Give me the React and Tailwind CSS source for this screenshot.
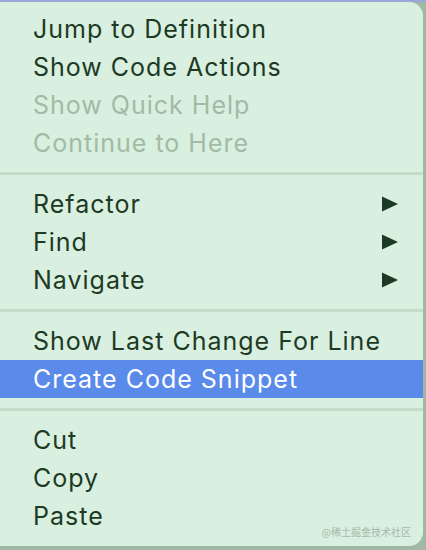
import { Fragment } from "react";

const sections = [
  [
    { label: "Jump to Definition" },
    { label: "Show Code Actions" },
    { label: "Show Quick Help", disabled: true },
    { label: "Continue to Here", disabled: true },
  ],
  [
    { label: "Refactor", submenu: true },
    { label: "Find", submenu: true },
    { label: "Navigate", submenu: true },
  ],
  [{ label: "Show Last Change For Line" }, { label: "Create Code Snippet", active: true }],
  [{ label: "Cut" }, { label: "Copy" }, { label: "Paste" }],
];

const Arrow = () => (
  <svg width="18" height="18" viewBox="0 0 18 18" className="shrink-0">
    <path d="M1 1.5 L17 9 L1 16.5 Z" fill="currentColor" />
  </svg>
);

const MenuItem = ({ item }) => {
  let color = "text-[#1d3a25]";
  if (item.disabled) color = "text-[#a2baa6]";
  if (item.active) color = "text-white bg-[#5a8aea]";
  return (
    <div className={`flex h-[38px] items-center justify-between pl-[33px] pr-[24px] ${color}`}>
      <span>{item.label}</span>
      {item.submenu && <Arrow />}
    </div>
  );
};

export default function App() {
  return (
    <div className="flex h-[550px] w-[426px] flex-col bg-[#a3b8a4] font-['Inter','Liberation_Sans',sans-serif]">
      <div className="h-[2px] bg-[#9ba7d8]" />
      <div className="relative mr-[3px] flex h-[544px] flex-col rounded-r-[14px] bg-[#d9efdf] text-[25px] leading-none tracking-[1px]">
        {sections.map((items, i) => (
          <Fragment key={i}>
            {i > 0 && <div className="h-[3px] bg-[#c3dbc7]" />}
            <div className={`flex flex-col ${i === 0 ? "pb-[10px] pt-[8px]" : "py-[10px]"}`}>
              {items.map((item) => (
                <MenuItem key={item.label} item={item} />
              ))}
            </div>
          </Fragment>
        ))}
        <span className="absolute bottom-[9px] right-[12px] font-['Noto_Sans_CJK_SC',sans-serif] text-[10px] tracking-normal text-[#a9b8ab]">
          @稀土掘金技术社区
        </span>
      </div>
    </div>
  );
}
